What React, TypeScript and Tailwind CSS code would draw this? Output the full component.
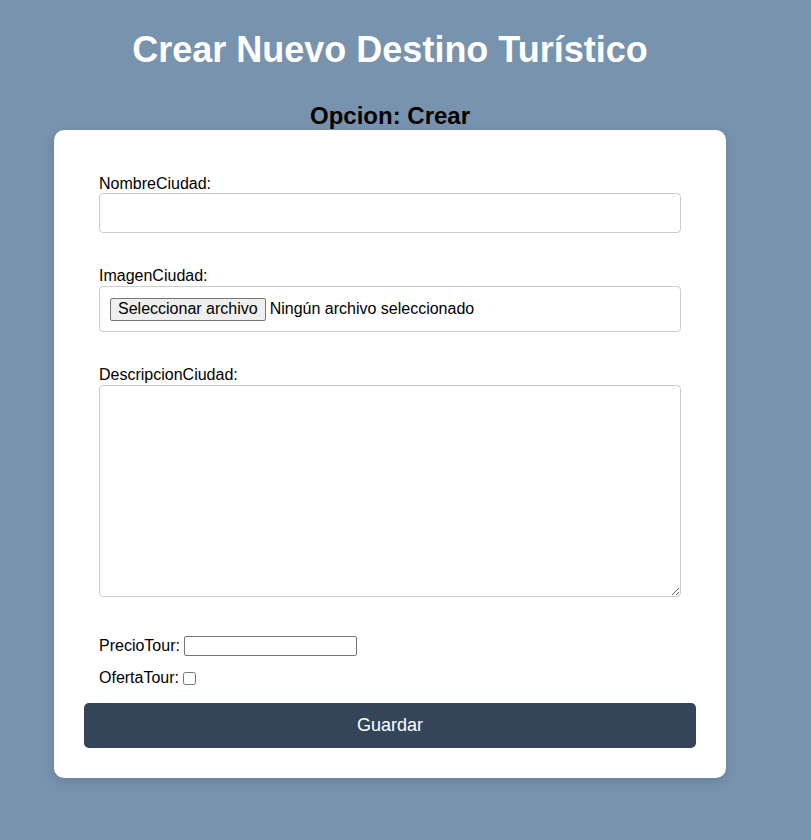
export default function App() {
  return (
    <div className="min-h-screen bg-[#7893ae] font-['Liberation_Sans',Arial,sans-serif] text-black">
      <div className="w-[780px] flex flex-col items-center pt-[30px] pb-[62px]">
        <h1 className="text-[36px] leading-[40px] font-bold text-white">Crear Nuevo Destino Turístico</h1>
        <h2 className="mt-[33px] text-[24px] leading-[26px] font-bold">Opcion: Crear</h2>

        <form
          className="mt-px w-[672px] bg-white rounded-[10px] shadow-[0_4px_12px_rgba(0,0,0,0.12)] px-[30px] pt-[45px] pb-[30px]"
          onSubmit={(e) => e.preventDefault()}
        >
          <div className="px-[15px] text-base">
            <label className="block leading-[18px]">NombreCiudad:</label>
            <input type="text" className="block w-full h-[40px] border border-[#ccc] rounded-[4px] px-[10px] outline-none" />

            <label className="block mt-[34px] leading-[18px]">ImagenCiudad:</label>
            <div className="mt-px flex items-center h-[46px] border border-[#ccc] rounded-[4px] px-[10px]">
              <span className="h-[23px] px-[7px] flex items-center border border-[#767676] rounded-[2px] bg-[#efefef] text-black">
                Seleccionar archivo
              </span>
              <span className="ml-[4px]">Ningún archivo seleccionado</span>
            </div>

            <label className="block mt-[34px] leading-[18px]">DescripcionCiudad:</label>
            <textarea className="block mt-px w-full h-[212px] border border-[#ccc] rounded-[4px] p-[10px] outline-none" />

            <div className="mt-[39px] h-[20px] flex items-center leading-[18px]">
              <span>PrecioTour:&nbsp;</span>
              <input type="text" className="w-[173px] h-[20px] border border-[#767676] rounded-[2px] px-[2px] outline-none" />
            </div>

            <div className="mt-[12px] h-[20px] flex items-center leading-[18px]">
              <span>OfertaTour:</span>
              <input type="checkbox" className="ml-[4px] w-[13px] h-[13px]" />
            </div>
          </div>

          <button
            type="submit"
            className="mt-[15px] w-full h-[45px] rounded-[5px] bg-[#34455a] text-white text-[18px]"
          >
            Guardar
          </button>
        </form>
      </div>
    </div>
  );
}
